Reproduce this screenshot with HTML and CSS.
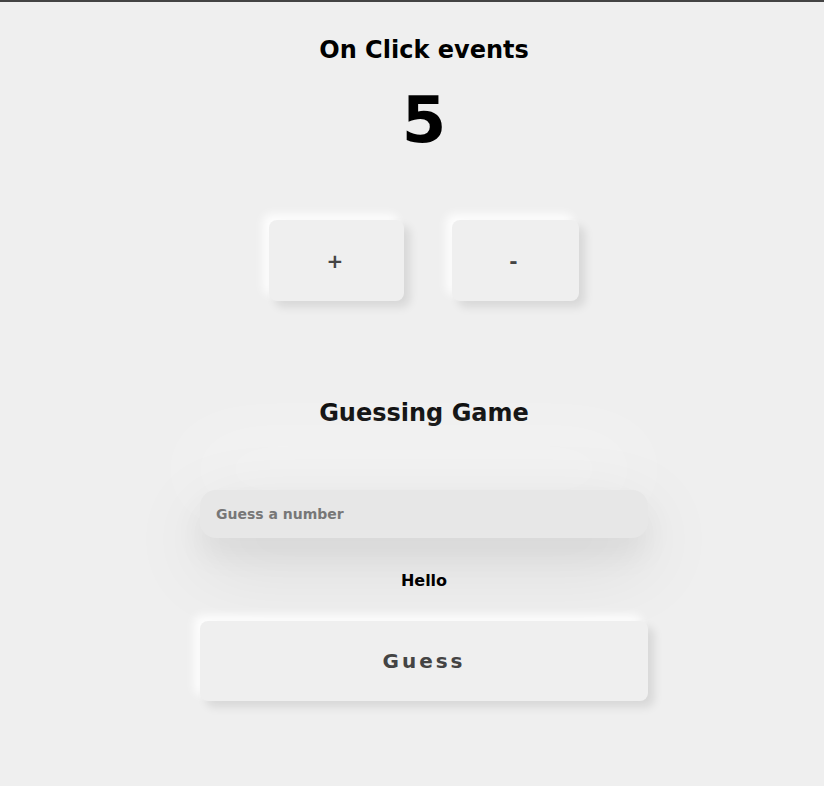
FILE: index.html
```html
<!DOCTYPE html>
<html>
<head>
<meta charset="utf-8">
<link rel="stylesheet" href="styles.css">
</head>
<body>
<main class="page">
  <section class="counter">
    <h2 class="title">On Click events</h2>
    <div class="count">5</div>
    <div class="btn-row">
      <button class="neu-btn small">+</button>
      <button class="neu-btn small">-</button>
    </div>
  </section>
  <section class="game">
    <h2 class="title game-title">Guessing Game</h2>
    <input class="guess-input" type="text" placeholder="Guess a number">
    <p class="message">Hello</p>
    <button class="neu-btn wide">Guess</button>
  </section>
</main>
</body>
</html>
```
FILE: styles.css
```css
html, body {
  margin: 0;
  padding: 0;
  background: #efefef;
}
body {
  border-top: 2px solid #444;
  min-height: 784px;
  font-family: "DejaVu Sans", sans-serif;
  color: #000;
}
.page {
  padding-left: 24px;
  display: flex;
  flex-direction: column;
  align-items: center;
}
.counter, .game {
  display: flex;
  flex-direction: column;
  align-items: center;
  width: 100%;
}
.title {
  margin: 0;
  font-size: 24px;
  font-weight: bold;
  line-height: 28px;
}
.counter .title {
  margin-top: 34px;
}
.count {
  margin-top: 19px;
  font-size: 64px;
  font-weight: bold;
  line-height: 74px;
}
.btn-row {
  display: flex;
  gap: 48px;
  margin-top: 63px;
}
.neu-btn {
  font-family: "DejaVu Sans", sans-serif;
  font-weight: bold;
  font-size: 20px;
  color: #444;
  background: #efefef;
  border: none;
  border-radius: 8px;
  box-shadow: 6px 6px 10px rgba(0, 0, 0, 0.1), -6px -6px 10px rgba(255, 255, 255, 0.9);
}
.small {
  height: 81px;
  padding: 0 61px 0 57px;
}
.game-title {
  margin-top: 98px;
}
.guess-input {
  margin-top: 63px;
  width: 448px;
  height: 48px;
  box-sizing: border-box;
  border: none;
  outline: none;
  border-radius: 16px;
  background: #e7e7e7;
  padding: 0 16px;
  font-family: "DejaVu Sans", sans-serif;
  font-weight: bold;
  font-size: 14px;
  color: #333;
  box-shadow: 0 18px 30px rgba(0, 0, 0, 0.05), 0 25px 80px rgba(0, 0, 0, 0.1), -10px -45px 80px rgba(255, 255, 255, 0.45);
}
.guess-input::placeholder {
  color: #777;
}
.message {
  margin: 33px 0 0;
  font-size: 16px;
  font-weight: bold;
  line-height: 19px;
}
.wide {
  margin-top: 31px;
  width: 448px;
  height: 80px;
  letter-spacing: 3px;
}
```
